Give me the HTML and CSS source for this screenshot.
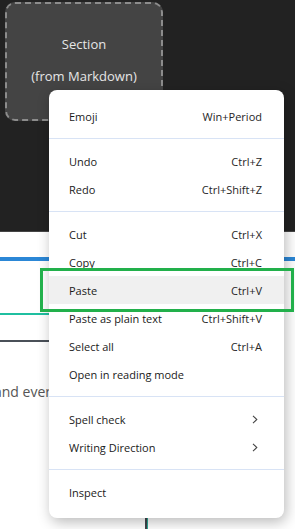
FILE: index.html
```html
<!DOCTYPE html>
<html>
<head>
<meta charset="utf-8">
<link rel="stylesheet" href="styles.css">
</head>
<body>
<div class="page">
  <div class="top">
    <div class="section-box">
      <div class="sec-line">Section</div>
      <div class="sec-line">(from Markdown)</div>
    </div>
  </div>
  <div class="content">
    <div class="line-blue"></div>
    <div class="line-teal"></div>
    <div class="line-dark"></div>
    <p class="body-text">and every</p>
    <div class="vline"></div>
  </div>

  <div class="menu">
    <div class="item"><span>Emoji</span><span class="key">Win+Period</span></div>
    <div class="sep"></div>
    <div class="item"><span>Undo</span><span class="key">Ctrl+Z</span></div>
    <div class="item"><span>Redo</span><span class="key">Ctrl+Shift+Z</span></div>
    <div class="sep"></div>
    <div class="item"><span>Cut</span><span class="key">Ctrl+X</span></div>
    <div class="item"><span>Copy</span><span class="key">Ctrl+C</span></div>
    <div class="item hover"><span>Paste</span><span class="key">Ctrl+V</span></div>
    <div class="item"><span>Paste as plain text</span><span class="key">Ctrl+Shift+V</span></div>
    <div class="item"><span>Select all</span><span class="key">Ctrl+A</span></div>
    <div class="item"><span>Open in reading mode</span></div>
    <div class="sep"></div>
    <div class="item"><span>Spell check</span><svg class="chev" width="6" height="9" viewBox="0 0 6 9"><path d="M1 0.8 L4.8 4.5 L1 8.2" fill="none" stroke="#444" stroke-width="1.1"/></svg></div>
    <div class="item"><span>Writing Direction</span><svg class="chev" width="6" height="9" viewBox="0 0 6 9"><path d="M1 0.8 L4.8 4.5 L1 8.2" fill="none" stroke="#444" stroke-width="1.1"/></svg></div>
    <div class="sep"></div>
    <div class="item"><span>Inspect</span></div>
  </div>

  <div class="green-frame"></div>
</div>
</body>
</html>
```

FILE: styles.css
```css
html, body {
  margin: 0;
  padding: 0;
}
body {
  background: #ffffff;
  font-family: "Open Sans", "Noto Sans", sans-serif;
}
.page {
  position: relative;
  width: 295px;
  height: 529px;
  overflow: hidden;
  background: #ffffff;
}
.top {
  height: 229px;
  background: #222222;
  border-bottom: 1px solid #454545;
  padding: 2px 0 0 5px;
  box-sizing: content-box;
}
.section-box {
  box-sizing: border-box;
  width: 158px;
  height: 119px;
  border: 2px dashed #8c8c8c;
  border-radius: 10px;
  background: #444444;
  color: #e6e6e6;
  font-size: 13px;
  line-height: 16px;
  display: flex;
  flex-direction: column;
  align-items: center;
  justify-content: center;
  gap: 16px;
  padding-bottom: 3px;
}
.content {
  display: flex;
  flex-direction: column;
}
.line-blue {
  margin-top: 25px;
  height: 4px;
  background: #2b87d6;
}
.line-teal {
  margin-top: 52px;
  height: 2px;
  width: 200px;
  background: #1fbfa0;
}
.line-dark {
  margin-top: 25px;
  height: 2px;
  width: 200px;
  background: #4a5058;
}
.body-text {
  margin: 40px 0 0 -6px;
  font-size: 14px;
  line-height: 20px;
  color: #555555;
  white-space: nowrap;
}
.vline {
  margin: 0 0 0 145px;
  width: 2px;
  height: 140px;
  background: #3f444b;
  border-right: 1px solid #2aa894;
}
.menu {
  position: absolute;
  left: 49px;
  top: 90px;
  width: 235px;
  box-sizing: border-box;
  padding: 12px 0;
  background: #ffffff;
  border-radius: 8px;
  box-shadow: 2px 4px 14px rgba(0, 0, 0, 0.28);
  font-size: 11px;
  color: #1a1a1a;
}
.item {
  height: 28px;
  display: flex;
  align-items: center;
  justify-content: space-between;
  padding: 0 22px 0 20px;
}
.item.hover {
  background: #f0f0f0;
}
.key {
  color: #262626;
}
.chev {
  margin-right: 4px;
}
.sep {
  height: 1px;
  margin: 8px 0;
  background: #d8e3f5;
}
.green-frame {
  position: absolute;
  left: 40px;
  top: 268px;
  width: 254px;
  height: 44px;
  box-sizing: border-box;
  border: 3px solid #22b04b;
}
```
